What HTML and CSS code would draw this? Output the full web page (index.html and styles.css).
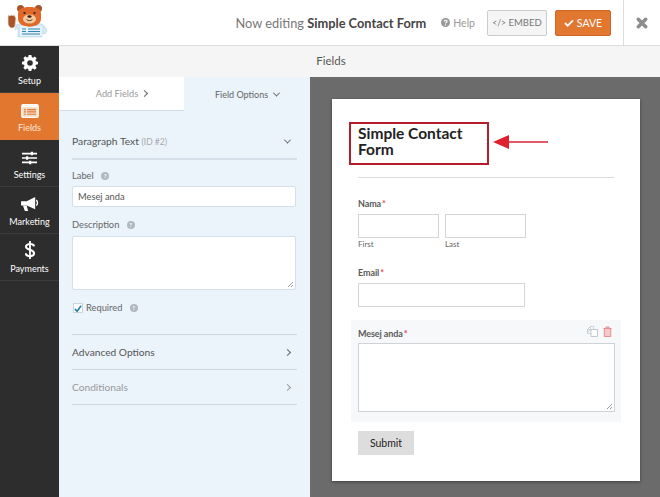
FILE: index.html
```html
<!DOCTYPE html>
<html lang="en">
<head>
    <meta charset="UTF-8">
    <meta name="viewport" content="width=device-width, initial-scale=1.0">
    <title>Now editing Simple Contact Form</title>
    <link rel="stylesheet" href="styles.css">
</head>
<body>
    <header class="topbar">
        <div class="logo">
            <svg width="42" height="34" viewBox="0 0 42 34">
                <path d="M10 21l8-3h11l6 2c3 1 5 4 6 7l-2 3-3-1v4H12V24l-3 2z" fill="#d3e8f5" stroke="#b4d3e6" stroke-width=".6"/>
                <path d="M2 13c0-2 1-2 2-1l1-1 2 .500 1-.500 2 3-1 8c-1 2-2 2-4 2-2-1-3-3-3-5z" fill="#a8532a" stroke="#ead9c7" stroke-width=".8"/>
                <rect x="14" y="22" width="22" height="10" fill="#e6f3fb"/>
                <path d="M16 25h4M16 27.500h4M22 25h12M22 27.500h12M16 30h18" stroke="#2f84b8" stroke-width="1.100"/>
                <circle cx="14.500" cy="4.500" r="3.500" fill="#a8532a"/>
                <circle cx="32.500" cy="4.500" r="3.500" fill="#a8532a"/>
                <path d="M12 10c0-5 4-7 11.500-7S35 5 35 10v5c0 3-2 5-5 6.500-4 1.500-9 1.500-13 0-3-1.500-5-3.500-5-6.500z" fill="#e0692a"/>
                <ellipse cx="23.500" cy="15" rx="6.500" ry="4.500" fill="#f6c99c"/>
                <circle cx="18.500" cy="9" r="1.100" fill="#222"/>
                <circle cx="28.500" cy="9" r="1.100" fill="#222"/>
                <ellipse cx="23.500" cy="12.500" rx="2.200" ry="1.300" fill="#3b2013"/>
                <path d="M20.500 15.500c2 1.500 4 1.500 6 0" stroke="#3b2013" fill="none" stroke-width=".8"/>
            </svg>
        </div>
        <div class="topbar-title">Now editing <b>Simple Contact Form</b></div>
        <a class="help">
            <svg width="9" height="9" viewBox="0 0 10 10"><circle cx="5" cy="5" r="5" fill="#9a9a9a"/><path d="M3.500 4c0-2 3.200-2 3.200-.2C6.700 5 5 5 5 6.200" stroke="#fff" fill="none" stroke-width="1.200"/><rect x="4.400" y="7" width="1.200" height="1.300" fill="#fff"/></svg>
            Help
        </a>
        <button class="btn-embed"><span class="code">&lt;/&gt;</span> EMBED</button>
        <button class="btn-save">
            <svg width="10" height="8" viewBox="0 0 11 9"><path d="M1 4.500l3 3 6-6" stroke="#fff" stroke-width="2" fill="none"/></svg>
            SAVE
        </button>
        <div class="close">
            <svg width="12" height="12" viewBox="0 0 13 13"><path d="M2.500 2.500l8 8M10.500 2.500l-8 8" stroke="#8d8d8d" stroke-width="3.800" stroke-linecap="round"/></svg>
        </div>
    </header>

    <div class="main">
        <nav class="sidebar">
            <a class="nav-item">
                <svg width="16" height="16" viewBox="0 0 20 20"><path d="M8.300 0h3.400l.5 2.600 1.500.7 2.300-1.500 2.300 2.400-1.500 2.200.6 1.500L20 8.300v3.400l-2.600.5-.6 1.500 1.500 2.200-2.300 2.400-2.300-1.500-1.500.6-.5 2.600H8.300l-.5-2.600-1.500-.6L4 18.300 1.700 15.900l1.500-2.200-.6-1.500L0 11.700V8.300l2.600-.5.6-1.500-1.500-2.200L4 1.700l2.300 1.500 1.500-.7z" fill="#fff"/><circle cx="10" cy="10" r="3.500" fill="#2d2d2d"/></svg>
                <span>Setup</span>
            </a>
            <a class="nav-item active">
                <svg width="18" height="14" viewBox="0 0 19 15"><rect x=".7" y=".7" width="17.600" height="13.600" rx="1.500" fill="#f6dcc6" stroke="#fff" stroke-width="1.400"/><rect x="1.400" y="1.400" width="16.200" height="2" fill="#fff"/><path d="M3 6h2M3 8.500h2M3 11h2M6.500 6H16M6.500 8.500H16M6.500 11H16" stroke="#e27730" stroke-width="1.300"/></svg>
                <span>Fields</span>
            </a>
            <a class="nav-item">
                <svg width="15" height="14" viewBox="0 0 17 15"><path d="M0 2.500h17M0 7.500h17M0 12.500h17" stroke="#fff" stroke-width="1.800"/><path d="M10 .5h2.500v4H10zM4.500 5.500H7v4H4.500zM8 10.500h2.500v4H8z" fill="#fff"/></svg>
                <span>Settings</span>
            </a>
            <a class="nav-item">
                <svg width="18" height="16" viewBox="0 0 19 17"><path d="M0 5.500h6L15 1v13L6 10H0z" fill="#fff"/><path d="M2 10h4l1.500 6H4z" fill="#fff"/><path d="M16 4.500c2 .8 2 4.700 0 5.500" stroke="#fff" stroke-width="1.500" fill="none"/></svg>
                <span>Marketing</span>
            </a>
            <a class="nav-item">
                <svg width="10" height="18" viewBox="0 0 11 20"><path d="M10 6c-.3-1.800-2-2.600-4.500-2.600S1 4.500 1 6.300c0 4.200 9 2.800 9 7.400 0 2-1.800 3-4.500 3S.9 15.600.8 13.600" stroke="#fff" stroke-width="2.300" fill="none"/><path d="M5.500 0v20" stroke="#fff" stroke-width="2"/></svg>
                <span>Payments</span>
            </a>
        </nav>

        <div class="content">
            <div class="subbar">Fields</div>
            <div class="builder">
                <section class="panel">
                    <div class="tabs">
                        <div class="tab">Add Fields <i class="chev chev-right"></i></div>
                        <div class="tab tab-active">Field Options <i class="chev chev-down"></i></div>
                    </div>
                    <div class="options">
                        <div class="group-head">
                            <span>Paragraph Text <small>(ID #2)</small></span>
                            <i class="chev chev-down"></i>
                        </div>
                        <div class="opt">
                            <label>Label <span class="tip">?</span></label>
                            <div class="opt-input">Mesej anda</div>
                        </div>
                        <div class="opt">
                            <label>Description <span class="tip">?</span></label>
                            <div class="opt-textarea"><span class="grip"></span></div>
                        </div>
                        <div class="opt-check">
                            <span class="checkbox">
                                <svg width="9" height="9" viewBox="0 0 9 9"><path d="M1 5l2.500 2.500L8 1.500" stroke="#1e7fae" stroke-width="1.800" fill="none"/></svg>
                            </span>
                            <label>Required <span class="tip">?</span></label>
                        </div>
                        <div class="collapsed">Advanced Options <i class="chev chev-right"></i></div>
                        <div class="collapsed muted">Conditionals <i class="chev chev-right"></i></div>
                    </div>
                </section>

                <section class="preview">
                    <div class="form-card">
                        <h2>Simple Contact Form</h2>
                        <div class="field">
                            <div class="field-label">Nama<em>*</em></div>
                            <div class="name-row">
                                <div><div class="box box-name"></div><div class="sub">First</div></div>
                                <div><div class="box box-name"></div><div class="sub">Last</div></div>
                            </div>
                        </div>
                        <div class="field field-email">
                            <div class="field-label">Email<em>*</em></div>
                            <div class="box box-email"></div>
                        </div>
                        <div class="field-active">
                            <div class="field-actions">
                                <svg width="11" height="11" viewBox="0 0 11 11"><path d="M3.500.5h3v3h-3l-3 3v-3z" fill="#fff" stroke="#c3c9ce" stroke-width=".8"/><path d="M.5 3.500l3-3v3zM.5 3.500v4h3.500" fill="none" stroke="#c3c9ce" stroke-width=".8"/><path d="M4 3.500h6.500v7H4z" fill="#fff" stroke="#b5bcc2" stroke-width=".8"/></svg>
                                <svg width="9" height="11" viewBox="0 0 9 11"><path d="M.5 2.500h8M3 2.500V1h3v1.500M1.300 2.500v8h6.400v-8" fill="#f3c9c9" stroke="#e58d8d"/></svg>
                            </div>
                            <div class="field-label">Mesej anda<em>*</em></div>
                            <div class="box box-area"><span class="grip"></span></div>
                        </div>
                        <button class="btn-submit">Submit</button>

                        <div class="note-box"></div>
                        <svg class="note-arrow" width="56" height="16" viewBox="0 0 56 16"><path d="M0 8L16 1v14z" fill="#e0202e"/><path d="M14 8h41" stroke="#d92530" stroke-width="1.600"/></svg>
                    </div>
                </section>
            </div>
        </div>
    </div>
</body>
</html>
```

FILE: styles.css
```css
* {
    margin: 0;
    padding: 0;
    box-sizing: border-box;
}

html, body {
    height: 497px;
    overflow: hidden;
}

body {
    font-family: 'Lato', sans-serif;
    color: #444;
    background: #fff;
}

.topbar {
    height: 46px;
    display: flex;
    align-items: center;
    border-bottom: 1px solid #ddd;
    background: #fff;
}

.logo {
    width: 59px;
    padding: 0 0 4px 6px;
    display: flex;
}

.topbar-title {
    margin-left: auto;
    font-size: 12.800px;
    color: #777;
    white-space: nowrap;
}

.topbar-title b {
    color: #444;
    font-weight: 700;
}

.help {
    margin-left: 15px;
    display: flex;
    align-items: center;
    gap: 3px;
    font-size: 10.500px;
    color: #999;
}

.btn-embed, .btn-save {
    height: 26px;
    font-family: inherit;
    border-radius: 2px;
}

.btn-embed {
    width: 60px;
    margin-left: 12px;
    background: #f5f5f5;
    border: 1px solid #ccc;
    color: #777;
    font-size: 9.500px;
}

.code {
    font-size: 8.500px;
}

.btn-save {
    width: 56px;
    margin-left: 8px;
    background: #e27730;
    border: 1px solid #cd6622;
    color: #fff;
    font-size: 10.500px;
    display: flex;
    align-items: center;
    justify-content: center;
    gap: 3px;
}

.close {
    margin-left: 12px;
    width: 37px;
    height: 45px;
    border-left: 1px solid #ddd;
    display: flex;
    align-items: center;
    justify-content: center;
}

.main {
    display: flex;
    height: 451px;
}

.sidebar {
    width: 59px;
    flex: none;
    background: #2d2d2d;
}

.nav-item {
    height: 47px;
    display: flex;
    flex-direction: column;
    align-items: center;
    justify-content: flex-end;
    gap: 4px;
    padding-bottom: 6px;
    font-size: 9px;
    line-height: 11px;
    color: #fff;
    border-bottom: 1px solid #3c3c3c;
}

.nav-item.active {
    background: #e27730;
    border-bottom-color: #e27730;
    color: #fde8d8;
}

.content {
    flex: 1;
    min-width: 0;
    display: flex;
    flex-direction: column;
}

.subbar {
    height: 31px;
    background: #f5f5f5;
    text-align: center;
    font-size: 11.500px;
    line-height: 30px;
    color: #555;
    padding-right: 57px;
}

.builder {
    flex: 1;
    display: flex;
    min-height: 0;
}

.panel {
    width: 251px;
    flex: none;
    background: #ebf3fb;
}

.tabs {
    height: 34px;
    display: flex;
}

.tab {
    flex: 1;
    display: flex;
    align-items: center;
    justify-content: center;
    gap: 4px;
    font-size: 9.200px;
    color: #999;
    background: #fff;
    border-bottom: 1px solid #d5dfe9;
}

.tab-active {
    flex: none;
    width: 126px;
    background: #ebf3fb;
    color: #666;
    border-bottom: none;
    font-size: 9px;
    gap: 6px;
}

.chev {
    display: inline-block;
    width: 5px;
    height: 5px;
    border-right: 1px solid #666;
    border-bottom: 1px solid #666;
}

.chev-right {
    transform: rotate(-45deg);
}

.chev-down {
    transform: rotate(45deg) translate(-1px, -1px);
}

.options {
    padding: 22px 13px 0;
}

.group-head {
    display: flex;
    justify-content: space-between;
    align-items: center;
    height: 27px;
    padding: 0 7px 9px 0;
    font-size: 10.300px;
    border-bottom: 2px solid #d5dfe9;
    color: #555;
}

.group-head small {
    font-size: 8.500px;
    color: #aaa;
}

.opt {
    margin-top: 9px;
}

.opt label, .opt-check label {
    display: block;
    font-size: 9.300px;
    line-height: 14px;
    color: #666;
}

.tip {
    display: inline-block;
    width: 8px;
    height: 8px;
    margin-left: 5px;
    border-radius: 50%;
    background: #b0b8c0;
    color: #fff;
    font-size: 6px;
    line-height: 8px;
    text-align: center;
    font-weight: 700;
    vertical-align: 1px;
}

.opt-input {
    margin-top: 3px;
    height: 21px;
    padding: 0 5px;
    width: 224px;
    background: #fff;
    border: 1px solid #d5dfe9;
    border-radius: 2px;
    font-size: 9.300px;
    line-height: 19px;
    color: #555;
}

.opt + .opt {
    margin-top: 11px;
}

.opt-textarea {
    position: relative;
    margin-top: 4px;
    width: 224px;
    height: 54px;
    background: #fff;
    border: 1px solid #d5dfe9;
    border-radius: 2px;
}

.grip {
    position: absolute;
    right: 2px;
    bottom: 2px;
    width: 6px;
    height: 6px;
    background: linear-gradient(135deg, transparent 55%, #999 55%, #999 65%, transparent 65%, transparent 78%, #999 78%, #999 88%, transparent 88%);
}

.opt-check {
    margin-top: 11px;
    display: flex;
    align-items: center;
    gap: 3px;
    height: 14px;
    padding-left: 1px;
}

.checkbox {
    width: 10px;
    height: 10px;
    background: #fff;
    border: 1px solid #ccd4dc;
    display: flex;
    align-items: center;
    justify-content: center;
}

.collapsed {
    display: flex;
    justify-content: space-between;
    align-items: center;
    height: 35px;
    padding-right: 7px;
    font-size: 10.200px;
    color: #555;
    border-bottom: 1px solid #ced8e2;
}

.opt-check + .collapsed {
    margin-top: 19px;
    height: 36px;
    border-top: 1px solid #ced8e2;
}

.collapsed.muted {
    color: #999;
}

.collapsed.muted .chev {
    border-color: #999;
}

.preview {
    flex: 1;
    min-width: 0;
    background: #6b6b6b;
    padding: 22px 20px 0 22px;
}

.form-card {
    position: relative;
    width: 308px;
    height: 382px;
    background: #fff;
    padding: 27px 26px 0;
    box-shadow: 0 1px 3px rgba(0, 0, 0, .4);
}

.form-card h2 {
    font-size: 15.500px;
    line-height: 15.500px;
    font-weight: 700;
    color: #222;
    height: 52px;
    padding-right: 136px;
    border-bottom: 1px solid #ddd;
}

.field {
    margin-top: 19px;
}

.field-label {
    font-size: 9px;
    line-height: 13px;
    font-weight: 700;
    letter-spacing: -.1px;
    color: #5a5a5a;
    margin-bottom: 4px;
}

.field-label em {
    color: #e5484d;
    font-style: normal;
    margin-left: 1px;
}

.name-row {
    display: flex;
    gap: 6px;
}

.box {
    border: 1px solid #d6d6d6;
    background: #fff;
    height: 24px;
}

.box-name {
    width: 81px;
}

.sub {
    margin-top: 1px;
    font-size: 8px;
    line-height: 11px;
    color: #666;
}

.field-email {
    margin-top: 16px;
}

.box-email {
    width: 167px;
}

.field-active {
    position: relative;
    margin: 13px -7px 0;
    width: 270px;
    height: 102px;
    padding: 7px 6px 0 7px;
    background: #f6f8fa;
}

.field-active .field-label {
    margin-bottom: 3px;
}

.field-actions {
    position: absolute;
    top: 6px;
    right: 9px;
    display: flex;
    align-items: center;
    gap: 5px;
}

.box-area {
    position: relative;
    height: 69px;
    border-color: #cfd3d7;
}

.btn-submit {
    display: block;
    margin-top: 9px;
    width: 56px;
    height: 24px;
    border: none;
    background: #dddddd;
    font-family: inherit;
    font-size: 10.500px;
    color: #222;
}

.note-box {
    position: absolute;
    left: 17px;
    top: 23px;
    width: 140px;
    height: 43px;
    border: 2px solid #b51c2c;
}

.note-arrow {
    position: absolute;
    left: 161px;
    top: 35px;
}
```
